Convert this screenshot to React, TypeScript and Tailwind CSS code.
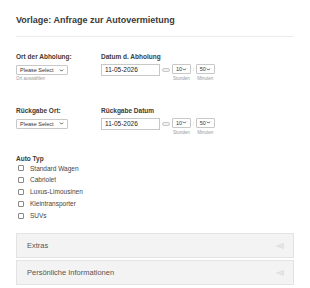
import { ChevronDown } from 'lucide-react'

const CARS = ['Standard Wagen', 'Cabriolet', 'Luxus-Limousinen', 'Kleintransporter', 'SUVs']

function FakeSelect({ value, w }: { value: string; w: string }) {
  return (
    <div className={`flex h-[10px] ${w} items-center justify-between rounded-[1px] border border-[#c8c8c8] bg-white px-[3px] text-[5.5px] text-[#333]`}>
      <span>{value}</span>
      <ChevronDown size={5} strokeWidth={4} className="text-[#333]" />
    </div>
  )
}

function TimeRow() {
  return (
    <div className="flex items-start">
      <div className="h-[12px] w-[59px] border border-[#c8c8c8] bg-white px-[3px] text-[6.5px] leading-[10px] text-[#222]">
        11-05-2026
      </div>
      <div className="ml-[2px] mt-[4px] h-[4px] w-[8px] rounded-[2px] border border-[#c8c8c8] bg-[#f2f2f2]" />
      <div className="ml-[2px] flex flex-col items-center">
        <FakeSelect value="10" w="w-[19px]" />
        <span className="mt-[2px] text-[4.5px] text-[#999]">Stunden</span>
      </div>
      <span className="mx-[1.5px] text-[6px] leading-[10px] text-[#999]">:</span>
      <div className="flex flex-col items-center">
        <FakeSelect value="50" w="w-[19px]" />
        <span className="mt-[2px] text-[4.5px] text-[#999]">Minuten</span>
      </div>
    </div>
  )
}

function Panel({ title }: { title: string }) {
  return (
    <div className="flex h-[25px] items-center justify-between border border-[#e3e3e3] bg-[#f3f3f3] pl-[10px] pr-[9px]">
      <span className="text-[7.5px] text-[#555]">{title}</span>
      <svg width="8" height="6" viewBox="0 0 8 6">
        <polygon points="0.5,3 7.5,0.5 7.5,5.5" fill="#e6e6e6" stroke="#d8d8d8" strokeWidth="0.6" />
      </svg>
    </div>
  )
}

export default function App() {
  return (
    <div className="min-h-[288px] w-[310px] bg-white px-[16px] pt-[14px] font-['Liberation_Sans',Arial,sans-serif] text-[#333]">
      <h1 className="text-[9px] font-bold leading-[12px] text-[#3a3a3a]">Vorlage: Anfrage zur Autovermietung</h1>
      <div className="mt-[10px] h-px w-[278px] bg-[#ececec]" />

      <div className="mt-[16px] flex">
        <div className="w-[85px]">
          <div className="text-[6.5px] font-bold leading-[8px] text-[#3d3a36]">Ort der Abholung:</div>
          <div className="mt-[4px]">
            <FakeSelect value="Please Select" w="w-[52px]" />
          </div>
          <div className="mt-[1px] text-[4.5px] text-[#999]">Ort auswählen</div>
        </div>
        <div>
          <div className="text-[6.5px] font-bold leading-[8px] text-[#3d3a36]">Datum d. Abholung</div>
          <div className="mt-[3px]">
            <TimeRow />
          </div>
        </div>
      </div>

      <div className="mt-[24px] flex">
        <div className="w-[85px]">
          <div className="text-[6.5px] font-bold leading-[8px] text-[#3d3a36]">Rückgabe Ort:</div>
          <div className="mt-[4px]">
            <FakeSelect value="Please Select" w="w-[52px]" />
          </div>
        </div>
        <div>
          <div className="text-[6.5px] font-bold leading-[8px] text-[#3d3a36]">Rückgabe Datum</div>
          <div className="mt-[3px]">
            <TimeRow />
          </div>
        </div>
      </div>

      <div className="mt-[18px] text-[6.5px] font-bold leading-[8px] text-[#3d3a36]">Auto Typ</div>
      <div className="flex flex-col">
        {CARS.map((c) => (
          <label key={c} className="flex h-[11.8px] items-center gap-[6px] pl-[2px]">
            <span className="h-[6px] w-[6px] rounded-[1px] border border-[#888] bg-white" />
            <span className="text-[6.5px] text-[#444]">{c}</span>
          </label>
        ))}
      </div>

      <div className="mt-[12px] flex flex-col gap-[2px]">
        <Panel title="Extras" />
        <Panel title="Persönliche Informationen" />
      </div>
    </div>
  )
}
